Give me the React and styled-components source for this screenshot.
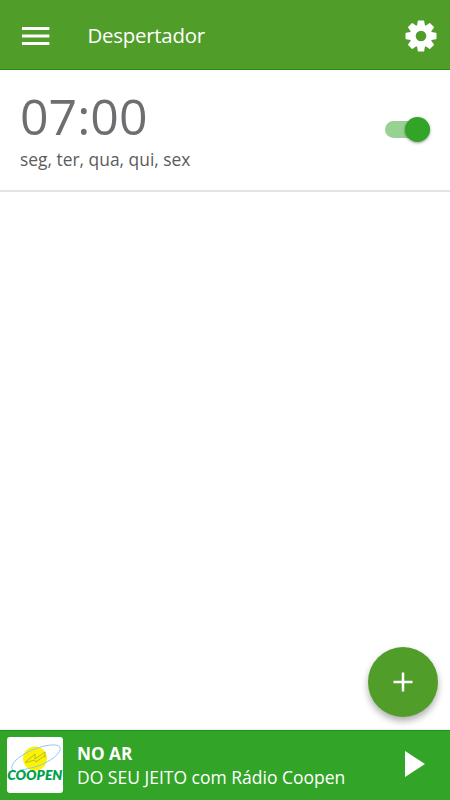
import React, { useState } from "react";
import styled, { createGlobalStyle } from "styled-components";

const colors = {
  header: "#519d2a",
  accent: "#32a428",
  border: "#e4e4e4",
  time: "#6d6e70",
  text: "#5c5c5c",
};

const GlobalStyle = createGlobalStyle`
  * {
    box-sizing: border-box;
  }

  body {
    background: #fff;
    font-family: "Open Sans", "Noto Sans", sans-serif;
    margin: 0;
  }

  button {
    background: none;
    border: none;
    cursor: pointer;
    font: inherit;
    padding: 0;
  }

  svg {
    display: block;
  }
`;

const Screen = styled.div`
  display: flex;
  flex-direction: column;
  height: 100vh;
  overflow: hidden;
  position: relative;
`;

const Header = styled.header`
  align-items: center;
  background: ${colors.header};
  border-bottom: 1px solid #258d12;
  color: #fff;
  display: flex;
  flex: none;
  height: 70px;
  padding: 2px 13px 0 21.5px;
`;

const Title = styled.h1`
  flex: 1;
  font-size: 20.4px;
  font-weight: 370;
  letter-spacing: -0.24px;
  line-height: 28px;
  margin: 0 0 2px 38px;
`;

const AlarmList = styled.main`
  flex: 1;
`;

const AlarmRow = styled.div`
  align-items: center;
  border-bottom: 2px solid ${colors.border};
  display: flex;
  height: 122px;
  justify-content: space-between;
  padding: 0 20px 2px;
`;

const Time = styled.div`
  color: ${colors.time};
  font-size: 50px;
  line-height: 58px;
`;

const Days = styled.div`
  color: ${colors.text};
  font-size: 17.4px;
  font-weight: 370;
  line-height: 24px;
  margin-top: 2px;
`;

const Switch = styled.button`
  background: ${(props) => (props.$on ? "#98d293" : "#bdbdbd")};
  border-radius: 9px;
  display: flex;
  align-items: center;
  height: 17px;
  justify-content: ${(props) => (props.$on ? "flex-end" : "flex-start")};
  width: 45px;
`;

const Knob = styled.span`
  background: ${(props) => (props.$on ? colors.accent : "#fafafa")};
  border-radius: 50%;
  box-shadow: 0 1px 3px rgba(0, 0, 0, 0.4);
  flex: none;
  height: 25px;
  width: 25px;
`;

const AddButton = styled.button`
  align-items: center;
  background: ${colors.header};
  border-radius: 50%;
  bottom: 82.6px;
  box-shadow: 0 4px 7px rgba(0, 0, 0, 0.32);
  display: flex;
  height: 70px;
  justify-content: center;
  position: absolute;
  right: 12.4px;
  width: 70px;
`;

const Player = styled.footer`
  align-items: center;
  background: ${colors.accent};
  border-top: 1px solid #1b9413;
  box-shadow: 0 -1px 2px rgba(0, 0, 0, 0.08);
  color: #fff;
  display: flex;
  flex: none;
  height: 70px;
  padding: 0 25px 2px 7px;
`;

const Cover = styled.div`
  background: #fff;
  border-radius: 3px;
  height: 56px;
  width: 56px;
`;

const Track = styled.div`
  flex: 1;
  font-size: 17.5px;
  font-weight: 370;
  line-height: 24px;
  margin-left: 14px;
`;

const Live = styled.div`
  font-size: 17.2px;
  font-weight: 700;
  line-height: 23px;
  padding-top: 1px;
`;

const MenuIcon = () => (
  <svg width="28" height="20" viewBox="0 0 28 20" fill="#fff">
    <path d="M0 1h27.4v3H0zM0 8.500h27.4v3H0zM0 16h27.4v3H0z" />
  </svg>
);

const GearIcon = () => (
  <svg width="32" height="32" viewBox="-16 -16 32 32">
    {[0, 45, 90, 135].map((angle) => (
      <path
        key={angle}
        d="M-2.5 -15.5h5q.6 0 .7.6l1 6v17.8l-1 6q-.1 .6-.7 .6h-5q-.6 0-.7-.6l-1-6v-17.8l1-6q.1-.6.7-.6z"
        fill="#fff"
        transform={`rotate(${angle})`}
      />
    ))}
    <circle r="11.2" fill="#fff" />
    <circle r="5.3" fill={colors.header} />
  </svg>
);

const Logo = () => (
  <svg width="56" height="56" viewBox="0 0 56 56">
    <circle cx="28" cy="21.5" r="12" fill="#fff200" />
    <path
      d="M5.500 33Q3 29 9 23C21 12 46 4.500 52.500 9.500C57 15 40 30 13 33"
      fill="none"
      stroke="#8bcdec"
      strokeWidth="1"
    />
    <path
      d="M18 25.500L28 17V22L38 15V20.500M19 25.500L27.500 23L29 25L38 18.500"
      fill="none"
      stroke="#a0b93a"
      strokeWidth="0.9"
    />
    <text
      x="0.3"
      y="43.3"
      fill="#00a14b"
      fontFamily="Lato, sans-serif"
      fontSize="13.4"
      fontStyle="italic"
      fontWeight="800"
      textLength="55"
      lengthAdjust="spacingAndGlyphs"
    >
      COOPEN
    </text>
  </svg>
);

const App = () => {
  const [on, setOn] = useState(true);

  return (
    <>
      <GlobalStyle />
      <Screen>
        <Header>
          <button aria-label="Menu">
            <MenuIcon />
          </button>
          <Title>Despertador</Title>
          <button aria-label="Ajustes">
            <GearIcon />
          </button>
        </Header>

        <AlarmList>
          <AlarmRow>
            <div>
              <Time>07:00</Time>
              <Days>seg, ter, qua, qui, sex</Days>
            </div>
            <Switch $on={on} aria-label="Alarme" onClick={() => setOn(!on)}>
              <Knob $on={on} />
            </Switch>
          </AlarmRow>
        </AlarmList>

        <Player>
          <Cover>
            <Logo />
          </Cover>
          <Track>
            <Live>NO AR</Live>
            <div>DO SEU JEITO com Rádio Coopen</div>
          </Track>
          <button aria-label="Tocar">
            <svg width="20" height="28" viewBox="0 0 20 28" fill="#fff">
              <path d="M0 0v26l20-13z" />
            </svg>
          </button>
        </Player>

        <AddButton aria-label="Adicionar">
          <svg width="20" height="20" viewBox="0 0 20 20" stroke="#fff" strokeWidth="2.5">
            <path d="M10 0.5v19M0.5 10h19" />
          </svg>
        </AddButton>
      </Screen>
    </>
  );
};

export default App;
